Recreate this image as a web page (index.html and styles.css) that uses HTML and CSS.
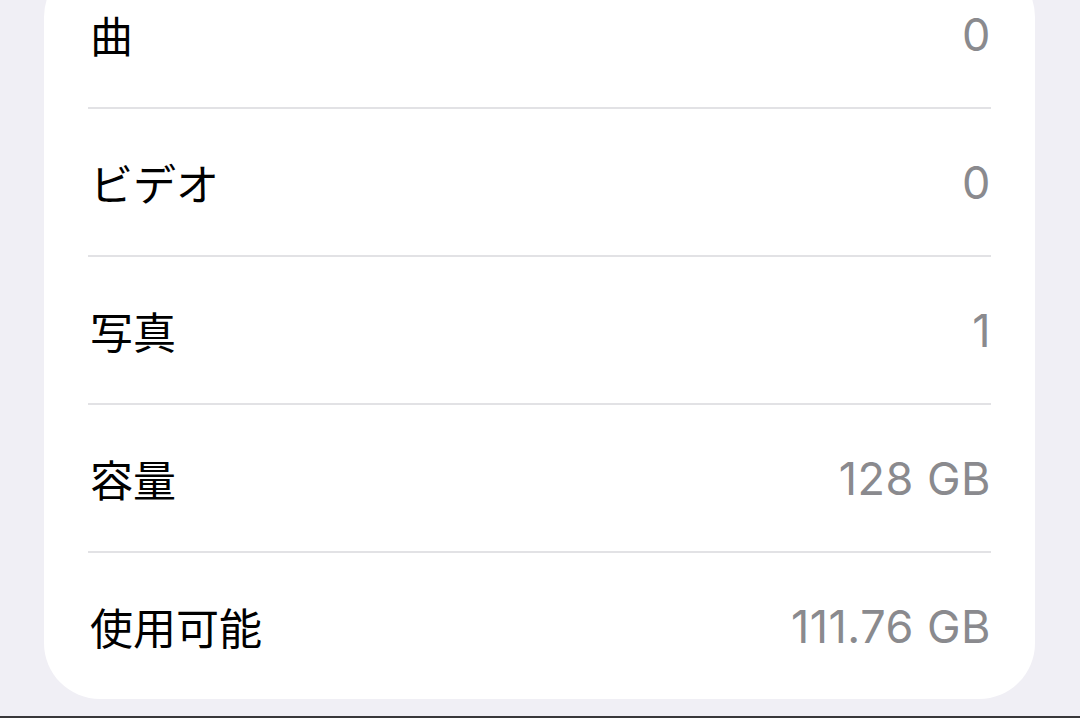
FILE: index.html
```html
<!DOCTYPE html>
<html lang="ja">
<head>
<meta charset="utf-8">
<link rel="stylesheet" href="styles.css">
</head>
<body>
<div class="page">
  <div class="card">
    <div class="row"><span class="label">曲</span><span class="value">0</span></div>
    <div class="row"><span class="label">ビデオ</span><span class="value">0</span></div>
    <div class="row"><span class="label">写真</span><span class="value">1</span></div>
    <div class="row"><span class="label">容量</span><span class="value">128 GB</span></div>
    <div class="row last"><span class="label">使用可能</span><span class="value">111.76 GB</span></div>
  </div>
  <div class="spacer"></div>
  <div class="bottom-bar"></div>
</div>
</body>
</html>
```
FILE: styles.css
```css
html, body {
  margin: 0;
  padding: 0;
  background: #f0eff5;
  overflow: hidden;
}
.page {
  height: 718px;
  display: flex;
  flex-direction: column;
}
.card {
  margin: -39px 45px 0 44px;
  background: #ffffff;
  border-radius: 56px;
  display: flex;
  flex-direction: column;
}
.row {
  height: 146px;
  margin: 0 44px;
  border-bottom: 2px solid #e2e2e5;
  display: flex;
  align-items: center;
  justify-content: space-between;
  padding: 0 1px 0 2px;
}
.row.last {
  border-bottom: none;
}
.label {
  font-family: "Noto Sans CJK JP", "Noto Sans", sans-serif;
  font-size: 43px;
  color: #000000;
  font-weight: 400;
}
.value {
  font-family: Inter, "Noto Sans", sans-serif;
  font-size: 45px;
  letter-spacing: 0.5px;
  margin-right: -1px;
  color: #8a8a8e;
  font-weight: 400;
}
.spacer {
  flex: 1;
}
.bottom-bar {
  height: 2px;
  background: #38383a;
}
```
